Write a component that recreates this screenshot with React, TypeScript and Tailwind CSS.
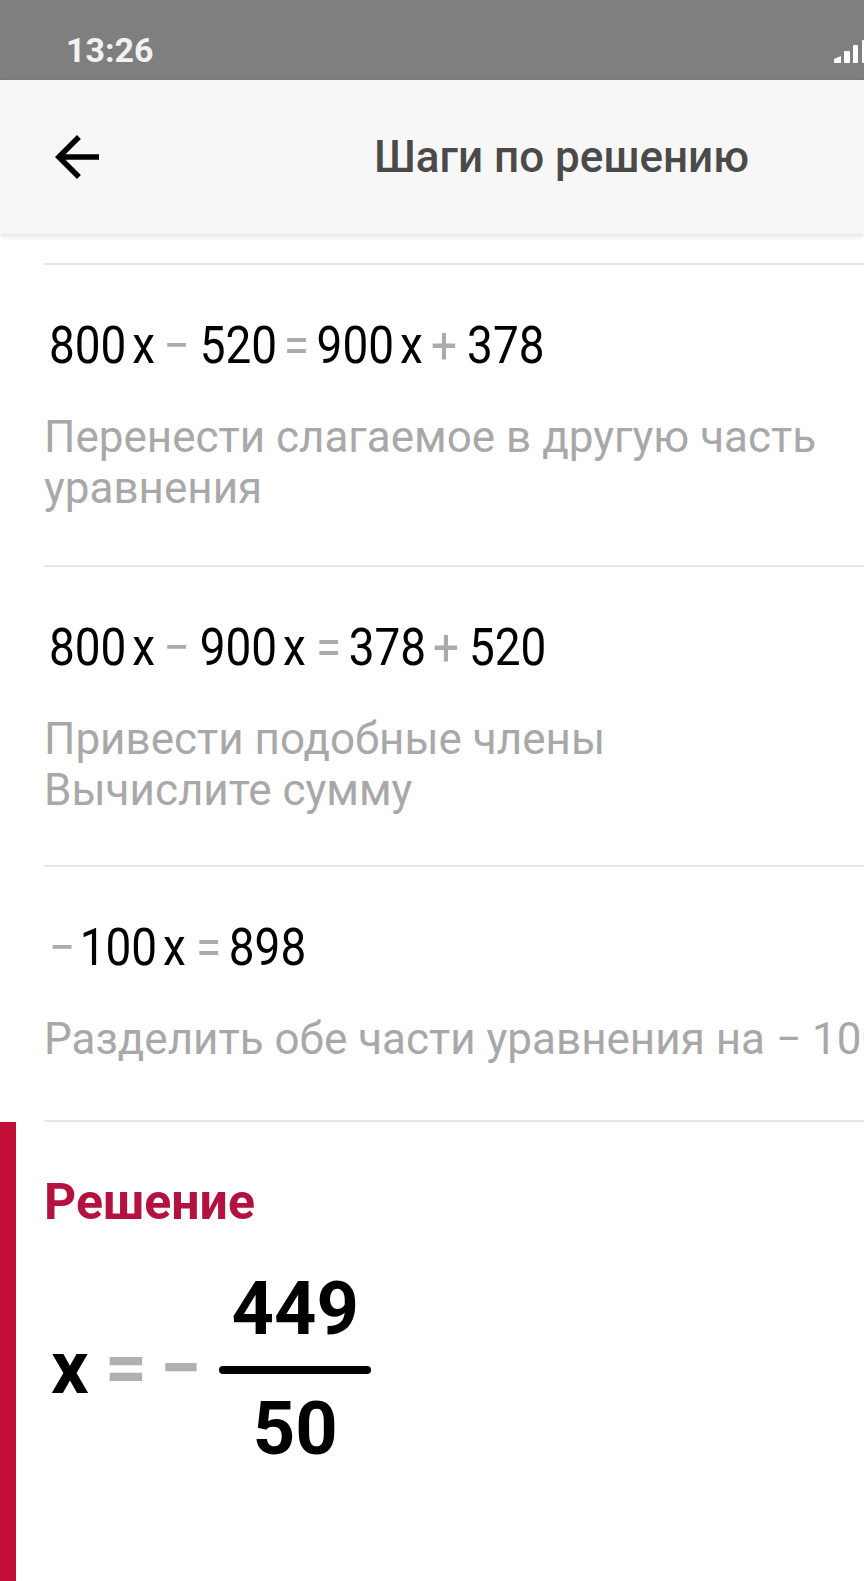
import React from "react";

type Kind = "n" | "v" | "o" | "e" | "u";
type Tok = { t: string; k: Kind };

function gapClass(prev: Tok | null, cur: Tok): string {
  if (!prev) return "";
  if (prev.k === "u") return "ml-[5px]";
  if (cur.k === "v") return "ml-[6.6px]";
  if (cur.k === "o") return prev.k === "v" ? "ml-[9.2px]" : "ml-[7.5px]";
  if (cur.k === "e") return prev.k === "v" ? "ml-[11.2px]" : "ml-[7.4px]";
  if (prev.k === "o") return "ml-[11.2px]";
  if (prev.k === "e") return "ml-[8.5px]";
  return "ml-[8px]";
}

function kindClass(k: Kind): string {
  if (k === "n" || k === "v") return "text-black";
  return "text-[#ababab]";
}

function Equation({ toks }: { toks: Tok[] }) {
  return (
    <div className="mt-[51px] ml-[5px] origin-left scale-x-[0.9] text-[51px] leading-[60px] whitespace-nowrap">
      {toks.map((tok, i) => (
        <span key={i} className={`${gapClass(i > 0 ? toks[i - 1] : null, tok)} ${kindClass(tok.k)}`}>
          {tok.t}
        </span>
      ))}
    </div>
  );
}

function Divider() {
  return <div className="h-[2px] bg-[#e6e6e6]" />;
}

const step1: Tok[] = [
  { t: "800", k: "n" },
  { t: "x", k: "v" },
  { t: "−", k: "o" },
  { t: "520", k: "n" },
  { t: "=", k: "e" },
  { t: "900", k: "n" },
  { t: "x", k: "v" },
  { t: "+", k: "o" },
  { t: "378", k: "n" },
];

const step2: Tok[] = [
  { t: "800", k: "n" },
  { t: "x", k: "v" },
  { t: "−", k: "o" },
  { t: "900", k: "n" },
  { t: "x", k: "v" },
  { t: "=", k: "e" },
  { t: "378", k: "n" },
  { t: "+", k: "o" },
  { t: "520", k: "n" },
];

const step3: Tok[] = [
  { t: "−", k: "u" },
  { t: "100", k: "n" },
  { t: "x", k: "v" },
  { t: "=", k: "e" },
  { t: "898", k: "n" },
];

export default function App() {
  return (
    <div className="w-[864px] h-[1581px] overflow-hidden bg-white flex flex-col font-[family-name:Roboto,sans-serif]">
      {/* Status bar */}
      <div className="h-[80px] shrink-0 bg-[#7f7f7f] flex justify-between items-start">
        <div className="pt-[30px] pl-[66px] text-[34px] leading-[40px] font-bold text-[#f2f2f2]">13:26</div>
        <svg className="mt-[38px] shrink-0" width="32" height="26" viewBox="0 0 32 26">
          <path d="M2 25 L2 21 L9 18 L9 25 Z" fill="#ffffff" />
          <rect x="12" y="13" width="6" height="12" rx="1" fill="#ffffff" />
          <rect x="21" y="7" width="5" height="18" rx="1" fill="#ffffff" />
          <rect x="30" y="2" width="5" height="23" rx="1" fill="#ffffff" />
        </svg>
      </div>

      {/* Header */}
      <div className="relative z-10 h-[154px] shrink-0 bg-[#f7f7f7] flex items-center shadow-[0_2px_6px_rgba(0,0,0,0.13)]">
        <svg className="ml-[44px] w-[66px] h-[66px] shrink-0" viewBox="0 0 24 24">
          <path d="M20 11H7.83l5.59-5.59L12 4l-8 8 8 8 1.41-1.41L7.83 13H20v-2z" fill="#000000" />
        </svg>
        <div className="ml-[264px] text-[44px] leading-[50px] font-medium text-[#4a4a4a] whitespace-nowrap">
          Шаги по решению
        </div>
      </div>

      {/* Steps */}
      <div className="pl-[44px] shrink-0 overflow-hidden">
        <div className="mt-[29px]">
          <Divider />
        </div>

        <Equation toks={step1} />
        <div className="mt-[36px] mb-[51px] text-[44px] leading-[51px] text-[#a8a8a8] whitespace-nowrap">
          <div>Перенести слагаемое в другую часть</div>
          <div>уравнения</div>
        </div>
        <Divider />

        <Equation toks={step2} />
        <div className="mt-[36px] mb-[49px] text-[44px] leading-[51px] text-[#a8a8a8] whitespace-nowrap">
          <div>Привести подобные члены</div>
          <div>Вычислите сумму</div>
        </div>
        <Divider />

        <Equation toks={step3} />
        <div className="mt-[36px] mb-[55px] text-[44px] leading-[51px] text-[#a8a8a8] whitespace-nowrap">
          <div>Разделить обе части уравнения на − 100</div>
        </div>
        <Divider />
      </div>

      {/* Solution */}
      <div className="flex flex-1">
        <div className="w-[16px] shrink-0 bg-[#c20e37]" />
        <div className="pl-[28px] pt-[52px]">
          <div className="text-[50px] leading-[56px] font-bold text-[#b3123f]">Решение</div>
          <div className="mt-[41px] ml-[7px] flex items-start">
            <span className="mt-[59px] text-[74px] leading-[76px] font-bold text-black">x</span>
            <span className="mt-[59px] ml-[16px] text-[74px] leading-[76px] font-bold text-[#b0b0b0]">=</span>
            <span className="mt-[59px] ml-[13px] text-[74px] leading-[76px] font-bold text-[#b0b0b0]">−</span>
            <div className="ml-[18px] w-[152px] flex flex-col items-center">
              <div className="text-[74px] leading-[76px] font-bold text-black">449</div>
              <div className="mt-[19px] h-[8px] w-full rounded-full bg-black" />
              <div className="mt-[17px] text-[74px] leading-[76px] font-bold text-black">50</div>
            </div>
          </div>
        </div>
      </div>
    </div>
  );
}
